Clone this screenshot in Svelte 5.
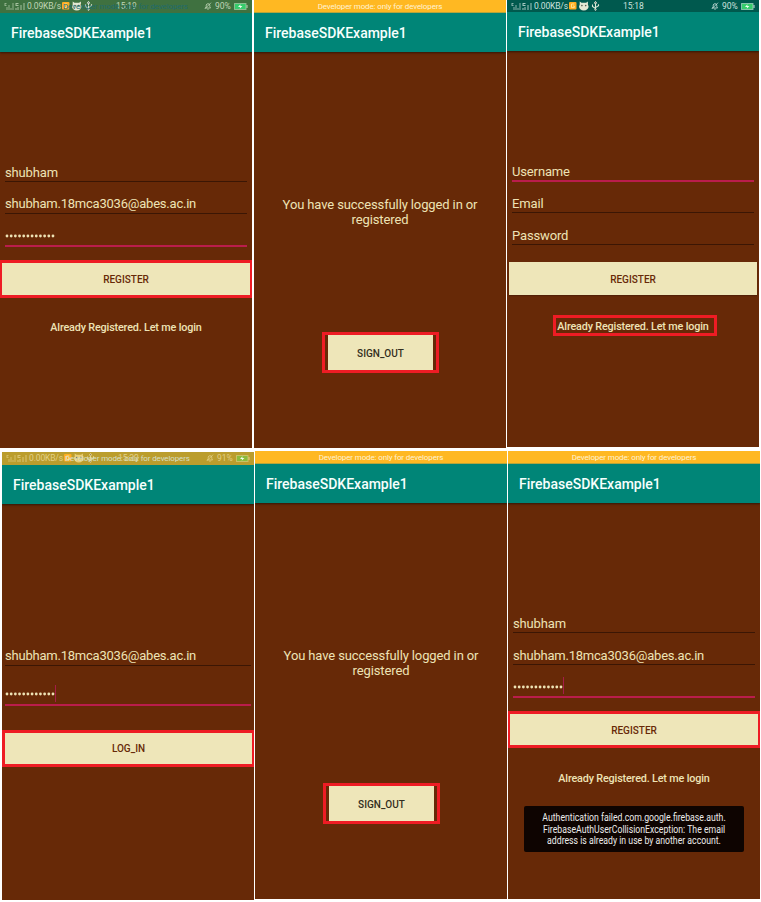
<script>
  const top = [
    {
      id: 'a', bar: 'fading', h: 448, gap: 0, lift: 0, speed: '0.09KB/s', time: '15:19', charge: '90%',
      fields: [{ text: 'shubham' }, { text: 'shubham.18mca3036@abes.ac.in' }, { dots: true, focus: true }],
      button: 'REGISTER', marked: true, link: true
    },
    { id: 'b', bar: 'developer', h: 448, gap: 2, lift: 0, message: true },
    {
      id: 'c', bar: 'normal', h: 447, gap: 1, lift: 0, speed: '0.00KB/s', time: '15:18', charge: '90%',
      fields: [{ text: 'Username', focus: true }, { text: 'Email' }, { text: 'Password' }],
      button: 'REGISTER', link: true, linkMarked: true
    }
  ];
  const bottom = [
    {
      id: 'd', bar: 'amber', h: 448, gap: 2, lift: 1, speed: '0.00KB/s', time: '15:22', charge: '91%',
      fields: [{ text: 'shubham.18mca3036@abes.ac.in' }, { dots: true, focus: true, caret: true }],
      button: 'LOG_IN', marked: true
    },
    { id: 'e', bar: 'developer', h: 448, gap: 1, lift: 0, message: true },
    {
      id: 'f', bar: 'developer', h: 448, gap: 1, lift: 0,
      fields: [{ text: 'shubham' }, { text: 'shubham.18mca3036@abes.ac.in' }, { dots: true, focus: true, caret: true }],
      button: 'REGISTER', marked: true, link: true, toast: true
    }
  ];
  const dots = Array.from({ length: 12 }, (_, i) => 2 + i * 4.18);
</script>

{#snippet status(s)}
  <div class="status {s.bar}">
    {#if s.bar === 'developer'}
      <span class="dev">Developer mode: only for developers</span>
    {:else}
      {#if s.bar !== 'normal'}<span class="ghost">Developer mode: only for developers</span>{/if}
      <svg class="signals" width="22" height="9" viewBox="0 0 22 9" fill="currentColor">
        <path d="M0 1h2v1H1v1h1v1H0zM2 5h1v3H2zM4 3h1v5H4zM8 1h1v7H8zM6 6h1v2H6z" opacity=".65" />
        <path d="M11 1h3v1h-2v1h2v1h-3zM13 5h1v3h-1zM16 3h1v5h-1zM19 1h1v7h-1zM11 6h1v2h-1z" opacity=".8" />
      </svg>
      <span class="speed">{s.speed}</span>
      <svg class="apps" width="32" height="10" viewBox="0 0 32 10">
        <rect class="tile" x="0" y="1" width="7.5" height="7.5" rx="1" />
        <path d="M5.3 3H2.5v3.6h2.8V5H4" fill="none" stroke="#ffe39b" stroke-width=".9" />
        <path class="cat" d="M10.7.6l1.8 1.2h4.6L18.9.6v2.8l.7 2.2c0 2.4-2 3.9-4.8 3.9S10 8 10 5.6l.7-2.2z" />
        <circle cx="12.9" cy="4.6" r=".8" fill="#555b4c" /><circle cx="16.7" cy="4.6" r=".8" fill="#555b4c" />
        <g class="usb" fill="none" stroke-width="1.1">
          <path d="M26.5 1v8M23.5 3.5v2l3 2M29.5 3.2v1.6l-3 1.8" />
        </g>
        <path class="usb" d="M25.3 2.2L26.5.4l1.2 1.8z" />
        <circle class="usb" cx="26.5" cy="8.6" r=".7" />
      </svg>
      <span class="time">{s.time}</span>
      <svg class="bell" width="8" height="8" viewBox="0 0 8 8" fill="none" stroke="currentColor" stroke-width=".8">
        <path d="M1.5 6h5L5.8 4.8V3a1.9 1.9 0 0 0-3.6 0v1.8zM3.3 7.2h1.4M.7 7L7 .7" />
      </svg>
      <span class="charge">{s.charge}</span>
      <svg class="battery" width="14" height="7" viewBox="0 0 14 7">
        <rect class="cell" x=".5" y=".5" width="11.5" height="6" />
        <path d="M12.5 2h1v3h-1z" fill="currentColor" />
        <path d="M6.5 1.2L4 3.9h2.1L5.7 5.8l2.7-2.7H6.3z" fill="#effff0" />
      </svg>
    {/if}
  </div>
{/snippet}

{#snippet screen(s)}
  <section class="screen {s.id}" style="height:{s.h}px;margin-left:{s.gap}px;margin-top:{s.lift}px">
    {@render status(s)}
    <header>FirebaseSDKExample1</header>
    {#if s.message}
      <p class="message">You have successfully logged in or<br />registered</p>
      <div class="signout"><button>SIGN_OUT</button></div>
    {:else}
      <div class="fields">
        {#each s.fields as f}
          <div class="field" class:focus={f.focus}>
            {#if f.dots}
              <svg class="dots" width="50" height="4" viewBox="0 0 50 4">
                {#each dots as x}<circle cx={x} cy="2" r="1.4" />{/each}
              </svg>
              {#if f.caret}<span class="caret"></span>{/if}
            {:else}<span class="value" class:email={f.text.includes('@')}>{f.text}</span>{/if}
          </div>
        {/each}
      </div>
      <button class="submit" class:marked={s.marked}>{s.button}</button>
      {#if s.link}<div class="link" class:boxed={s.linkMarked}><span>Already Registered. Let me login</span></div>{/if}
      {#if s.toast}
        <div class="toast">
          <div>Authentication failed.com.google.firebase.auth.</div>
          <div>FirebaseAuthUserCollisionException: The email</div>
          <div>address is already in use by another account.</div>
        </div>
      {/if}
    {/if}
  </section>
{/snippet}

<main>
  <div class="row">{#each top as s}{@render screen(s)}{/each}</div>
  <div class="row">{#each bottom as s}{@render screen(s)}{/each}</div>
</main>

<style>
  :global(body) { background: #fff; }
  main { width: 761px; height: 902px; overflow: hidden; font-family: Roboto, sans-serif; color: #eee3b5; }
  .row { display: flex; align-items: flex-start; height: 451px; }
  .screen { width: 252px; flex: none; display: flex; flex-direction: column; background: #672907; overflow: hidden; }
  .status { position: relative; height: 13px; flex: none; display: flex; align-items: center; box-sizing: border-box; font-size: 8px; line-height: 12px; white-space: nowrap; padding-bottom: 1px; }
  .developer { background: #ffb822; color: #fff3d4; justify-content: center; border-bottom: 1px solid #b5a43c; padding: 1px 0 0; }
  .dev { letter-spacing: -.13px; }
  .fading { background: #3f7140; color: #c0d6b7; }
  .normal { background: #00594e; color: #cce2de; height: 12px; padding: 0; }
  .amber { background: #bb9d2d; color: #e2cf86; }
  .signals { margin-left: 4px; width: 23px; }
  .speed { width: 35px; font-size: 8.5px; letter-spacing: -.14px; }
  .apps { width: 32px; }
  .tile { fill: #ffae20; }
  .cat { fill: #e4e8d4; }
  .usb { stroke: #dbe8d8; }
  .amber .usb { stroke: #ead58b; }
  .time { margin-left: 22px; width: 68px; font-size: 8.5px; letter-spacing: -.1px; }
  .bell { margin-left: 20px; }
  .charge { margin-left: 3px; width: 19px; font-size: 8.5px; }
  .cell { fill: #37cc6c; stroke: currentColor; stroke-opacity: .6; }
  .amber .cell { fill: #8dbb3b; }
  .amber .cat { fill: #e9cf77; }
  .ghost { position: absolute; left: 63px; top: 1px; color: #216b6c; letter-spacing: -.13px; }
  .amber .ghost { color: #d5dfc6; }
  header { flex: none; height: 39px; line-height: 40px; box-sizing: border-box; padding-left: 11px; background: #008577; color: #f7fffd; font-size: 14px; font-weight: 500; box-shadow: 0 1px 2px #321606; }
  .fields { margin-top: 98px; padding: 0 5px; }
  .field { height: 32px; box-sizing: border-box; border-bottom: 1px solid #3b1604; padding-top: 12px; font-size: 13px; line-height: 19px; display: flex; white-space: nowrap; letter-spacing: -.14px; }
  .value { padding-top: 1px; height: 18px; }
  .email { letter-spacing: -.22px; }
  .a .email, .d .email { padding-top: 0; }
  .field.focus { border-bottom: 2px solid #b91d4c; height: 33px; margin-bottom: -1px; }
  .dots { display: block; margin-top: 8px; fill: #eee3b5; }
  .caret { width: 1px; height: 17px; background: #a51d48; }
  button { border: 0; padding: 2px 0 0; box-sizing: border-box; font: 500 10px/20px Roboto, sans-serif; background: #eee6b9; color: #672907; display: block; }
  .submit { flex: none; width: 248px; height: 33px; margin: 17px 2px 0; box-shadow: 0 1px 1px #532006; }
  .submit.marked { width: 252px; height: 38px; margin: 14px 0 0; border: 3px solid #ee1c24; border-width: 3px 2px; box-shadow: none; }
  .link { display: flex; justify-content: center; margin-top: 19px; }
  .link span { display: block; font-size: 10.8px; letter-spacing: -.16px; font-weight: 500; line-height: 15px; padding: 3px 0; white-space: nowrap; }
  .link.boxed span { border: 3px solid #ee1c24; padding: 2px 5px 0 1px; line-height: 13px; margin-left: 4px; }
  .message { flex: none; margin: 145px 0 0; text-align: center; font-size: 13px; letter-spacing: -.12px; line-height: 15px; height: 30px; }
  .signout { flex: none; width: 111px; height: 35px; border: 3px solid #ee1c24; margin: 105px 0 0 68px; display: flex; }
  .signout button { width: 105px; margin-left: 3px; color: #332e20; }
  .toast { width: 220px; height: 46px; box-sizing: border-box; margin: 17px auto 0; padding-top: 6px; background: #0e0401; border-radius: 2px; color: #ecebea; font-size: 10px; line-height: 11.6px; text-align: center; white-space: nowrap; }
  .toast div { transform: scaleX(.87); }
  .c .link { margin-top: 20px; }
  .d .fields { margin-top: 130px; padding: 0 3px; }
  .d .field.focus { height: 40px; }
  .d .dots { margin-top: 14px; }
  .d .caret { margin-top: 7px; }
  .d .submit { height: 37px; margin-top: 25px; border-width: 3px 2px 3px 3px; padding-top: 0; }
  .f .submit { height: 37px; }
  .f .link { margin-top: 20px; }
</style>
